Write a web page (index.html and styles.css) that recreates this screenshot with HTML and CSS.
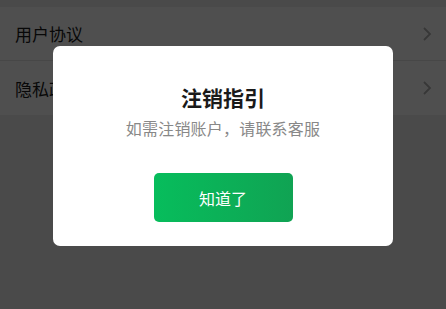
FILE: index.html
```html
<!DOCTYPE html>
<html lang="zh-CN">
<head>
    <meta charset="UTF-8">
    <meta name="viewport" content="width=device-width, initial-scale=1.0">
    <title>设置</title>
    <link rel="stylesheet" href="styles.css">
</head>
<body>
    <div class="list">
        <div class="list-item">
            <span>用户协议</span>
            <svg class="arrow" width="10" height="16" viewBox="0 0 10 16"><path d="M2 2l6 6-6 6" fill="none" stroke="#b2b2b2" stroke-width="1.8"/></svg>
        </div>
        <div class="list-item">
            <span>隐私政策</span>
            <svg class="arrow" width="10" height="16" viewBox="0 0 10 16"><path d="M2 2l6 6-6 6" fill="none" stroke="#b2b2b2" stroke-width="1.8"/></svg>
        </div>
    </div>

    <div class="mask">
        <div class="dialog">
            <div class="dialog-title">注销指引</div>
            <div class="dialog-desc">如需注销账户，请联系客服</div>
            <div class="dialog-btn">知道了</div>
        </div>
    </div>
</body>
</html>
```

FILE: styles.css
```css
* {
    margin: 0;
    padding: 0;
    box-sizing: border-box;
}

body {
    background: #ededed;
    font-family: "Noto Sans CJK SC", "Noto Sans", sans-serif;
    height: 100vh;
    overflow: hidden;
    padding-top: 7px;
}

.list {
    background: #fff;
}

.list-item {
    height: 54px;
    display: flex;
    align-items: center;
    justify-content: space-between;
    padding: 0 14px 0 15px;
    font-size: 17px;
    color: #1a1a1a;
    border-bottom: 1px solid #e5e5e5;
}

.list-item:last-child {
    border-bottom: none;
}

.mask {
    position: fixed;
    top: 0;
    left: 0;
    width: 100%;
    height: 100%;
    background: rgba(0, 0, 0, 0.69);
    display: flex;
    justify-content: center;
    align-items: flex-start;
    padding-top: 46px;
}

.dialog {
    width: 340px;
    background: #fff;
    border-radius: 7px;
    display: flex;
    flex-direction: column;
    align-items: center;
    padding: 36px 0 24px;
}

.dialog-title {
    font-size: 21px;
    font-weight: 700;
    color: #1a1a1a;
    line-height: 30px;
}

.dialog-desc {
    font-size: 16px;
    color: #888;
    line-height: 22px;
    margin-top: 5px;
    letter-spacing: 0.2px;
}

.dialog-btn {
    margin-top: 34px;
    width: 139px;
    height: 49px;
    border-radius: 5px;
    background: linear-gradient(90deg, #07bd5c, #10a353);
    color: #fff;
    font-size: 16px;
    display: flex;
    align-items: center;
    justify-content: center;
}
```
